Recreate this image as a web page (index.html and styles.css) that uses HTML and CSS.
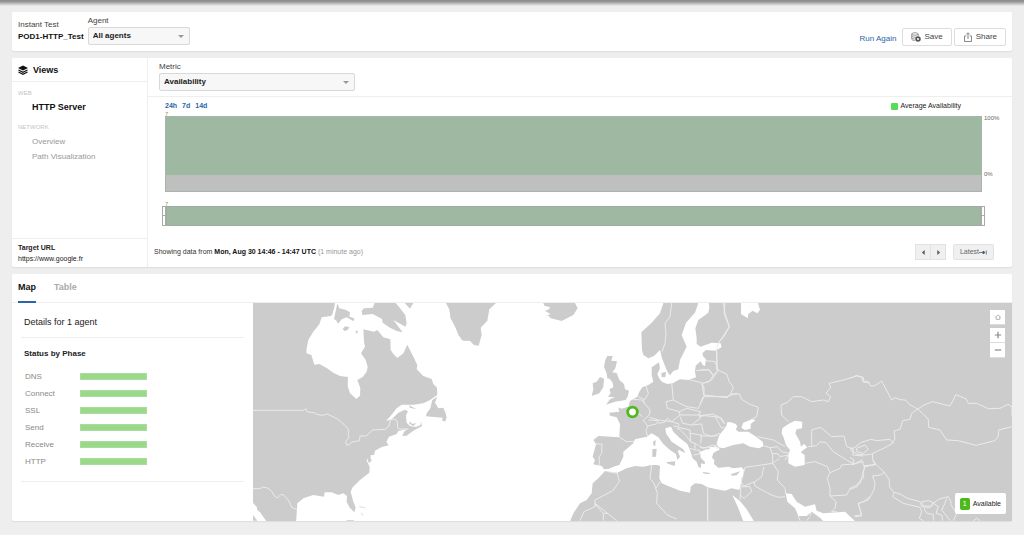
FILE: index.html
```html
<!DOCTYPE html>
<html lang="en">
<head>
<meta charset="utf-8">
<title>Instant Test</title>
<link rel="stylesheet" href="styles.css">
</head>
<body>
<div class="topshade"></div>
<div class="page">
  <header class="card header">
    <div class="test"><span class="test-label">Instant Test</span><span class="test-name">POD1-HTTP_Test</span></div>
    <div class="field agent">
      <label for="agent">Agent</label>
      <div class="pick"><select id="agent"><option>All agents</option></select></div>
    </div>
    <div class="actions">
      <a class="run" href="#">Run Again</a>
      <button class="btn" type="button"><svg class="icon" viewBox="0 0 20 20"><g fill="none" stroke="#777" stroke-width="1.5"><ellipse cx="8" cy="4" rx="6.500" ry="2.500"/><path d="M1.500 4v10c0 2 3 3 6 3M14.500 4v4M1.500 8c1 2 5 3 9 2M1.500 12c1 1 3 2 6 2"/></g><circle cx="14" cy="14" r="5.500" fill="#555"/><circle cx="14" cy="14" r="2" fill="#fff"/></svg>Save</button>
      <button class="btn" type="button"><svg class="icon" viewBox="0 0 20 20" fill="none" stroke="#666" stroke-width="1.500"><path d="M6.500 8H3v11h14V8h-3.500M10 14V2M6.500 5 10 1.500 13.500 5"/></svg>Share</button>
    </div>
  </header>

  <section class="card main">
    <aside class="side">
      <h2 class="side-title"><svg class="layers" viewBox="0 0 20 20"><path d="M10 1 20 6 10 11 0 6Z" fill="#111"/><path d="M1 10l9 4.500L19 10M1 14l9 4.500L19 14" fill="none" stroke="#111" stroke-width="2.500"/></svg>Views</h2>
      <nav class="views">
        <h3>WEB</h3>
        <a class="current" href="#">HTTP Server</a>
        <h3>NETWORK</h3>
        <a href="#">Overview</a>
        <a href="#">Path Visualization</a>
      </nav>
      <div class="target"><b>Target URL</b><span>https://www.google.fr</span></div>
    </aside>
    <div class="content">
      <div class="field metric">
        <label for="metric">Metric</label>
        <div class="pick"><select id="metric"><option>Availability</option></select></div>
      </div>
      <div class="timeline">
        <div class="range"><a href="#">24h</a><a href="#">7d</a><a href="#">14d</a><span class="legend"><i></i>Average Availability</span></div>
        <div class="tick">7</div>
        <div class="plot-row"><div class="plot"></div><div class="axis"><span>100%</span><span>0%</span></div></div>
        <div class="tick second">7</div>
        <div class="mini"><i class="handle"></i><div class="mini-fill"></div><i class="handle"></i></div>
      </div>
      <div class="footer">
        <p>Showing data from <b>Mon, Aug 30 14:46 - 14:47 UTC</b> <span>(1 minute ago)</span></p>
        <div class="pager">
          <button type="button" aria-label="Previous"><svg viewBox="0 0 6 6"><path d="M4.500 0v6L1 3Z" fill="#566"/></svg></button><button type="button" aria-label="Next"><svg viewBox="0 0 6 6"><path d="M1.500 0v6L5 3Z" fill="#566"/></svg></button>
        </div>
        <button class="latest" type="button">Latest<svg viewBox="0 0 16 10"><path d="M0 5h12M8 2l4 3-4 3ZM14.500 1v8" fill="#456" stroke="#456" stroke-width="1.500"/></svg></button>
      </div>
    </div>
  </section>

  <section class="card lower">
    <nav class="tabs"><a class="on" href="#">Map</a><a href="#">Table</a></nav>
    <div class="split">
      <div class="details">
        <h2>Details for 1 agent</h2>
        <h3>Status by Phase</h3>
        <dl class="phases">
          <dt>DNS</dt><dd></dd>
          <dt>Connect</dt><dd></dd>
          <dt>SSL</dt><dd></dd>
          <dt>Send</dt><dd></dd>
          <dt>Receive</dt><dd></dd>
          <dt>HTTP</dt><dd></dd>
        </dl>
      </div>
      <div class="map">
        <svg class="world" viewBox="253 303 759 218" preserveAspectRatio="xMidYMid slice" role="img" aria-label="World map">
          <g transform="translate(250 300) scale(.33333)">
            <path class="land" d="M0 0H256L253 22 247 43 243 48 215 52 208 73 190 95 175 120 170 145 169 160 184 165 193 194 208 192 230 204 250 218 270 228 294 231 293 258 300 280 319 297 330 287 331 265 322 240 338 231 350 215 353 200 347 180 333 160 345 140 342 125 340 88 372 95 382 90 400 112 421 118 422 150 430 162 442 174 460 160 472 134 490 170 502 195 500 208 520 228 545 237 550 252 561 263 562 285 540 300 520 310 490 314 455 314 440 325 420 350 408 363 425 358 445 338 465 329 474 334 468 346 470 368 480 378 497 381 512 375 513 364 516 378 490 392 470 407 457 408 462 395 472 387 445 393 440 402 417 410 409 425 416 436 395 441 375 452 372 465 362 465 362 478 366 480 357 490 351 475 350 482 359 500 358 518 330 540 308 562 302 575 310 605 317 622 313 637 298 622 290 605 291 588 280 580 265 585 245 577 224 577 222 590 190 585 160 595 142 610 138 670H54L30 637 22 630 20 620 0 600Z"/>
            <path class="land" d="M378 0H430L437 9 452 27 466 45 470 72 466 80 448 70 430 60 458 97 440 93 420 83 398 68 396 57 368 42 337 45 335 33 342 25 368 23ZM262 10 268 25 286 29 300 37 298 50 313 55 311 64 290 52 275 58 264 71 258 60 252 58ZM464 9H490L480 26ZM278 88 285 79 298 81 293 90 284 93ZM316 93 324 92 321 103ZM562 290 555 308 565 325 580 323 587 340 590 353 585 365 576 361 578 353 528 349 530 340 541 325 547 300ZM477 316 500 328 480 323ZM478 364 487 372 499 369 490 378 479 372ZM9 645 22 662H9ZM290 661H312V665H290ZM588 9H670V122H640L625 105 615 75 602 55 598 25Z"/>
            <path class="speck" d="M328 620l18 3M334 638l4 9"/>
            <path class="border" d="M0 331H162L167 326 172 336 192 338 200 343 217 346 232 342 262 357 282 373 295 388 295 407 298 411 287 425 290 436 300 432 306 426 328 422 330 408 348 408 368 390 405 388 417 378 422 358 437 358 442 366 443 384 448 387 475 387M0 566H30L38 561 53 564 65 574 74 589 82 594 92 584 100 584 113 598 118 606 125 622 142 629"/>
          </g>
          <g transform="translate(430 300) scale(.33333)">
            <path class="land" d="M48 9H198L178 28 172 62 152 83 155 105 146 137 132 135 118 121 95 120 80 90 62 55 58 28ZM340 9H435L443 25 430 45 395 63 360 54 357 47 348 47 362 42 345 33 357 28 360 22 343 17Z"/>
          </g>
          <g transform="translate(580 300) scale(.33333)">
            <path class="land" d="M82 168H98L94 182 111 184 106 205 97 217 110 219 118 240 132 252 135 268 147 272 143 290 137 300 105 305 78 314 90 298 105 292 84 290 92 280 88 268 100 262 98 248 90 237 82 235 80 220 72 200 76 180ZM60 231 72 236 70 262 58 280 35 288 40 268 38 250 50 245Z"/>
            <path class="land" d="M253 0H358L345 38 318 68 305 105 320 140 300 180 295 208 280 213 270 226 262 215 246 175 240 150 222 168 205 175 190 165 186 150 184 97 215 68 240 40ZM244 219 258 215 256 232 245 231ZM219 425 227 420 226 437 221 437ZM217 448 230 446 228 470 217 471ZM258 487 286 484 284 498 264 491ZM368 516 393 519 382 523 370 520Z"/>
            <path class="land" d="M1310 0H385L388 22 385 38 355 60 346 85 350 115 350 132 362 140 395 128 422 130 425 142 405 152 378 150 367 160 370 170 378 178 375 198 368 195 362 184 347 197 345 215 348 232 325 240 300 238 278 250 262 252 247 246 238 236 232 222 240 205 237 187 215 202 215 225 220 245 205 255 187 262 178 275 172 290 150 303 145 320 124 326 115 322 118 335 88 338 90 347 110 352 120 372 118 412 55 408 40 420 48 432 38 470 45 480 40 493 65 498 72 508 85 507 100 500 118 495 130 470 130 455 160 430 165 418 200 410 215 400 235 412 250 432 270 450 288 462 292 480 300 470 293 452 298 450 316 460 310 448 275 425 258 400 256 385 273 380 280 395 300 415 322 432 330 450 338 475 350 485 355 500 362 505 364 490 374 493 375 486 362 473 360 455 380 448 402 450 415 443 420 448 400 459 396 473 403 480 402 492 415 503 435 502 445 500 460 505 485 502 492 510 490 525 478 570 455 565 435 572 410 568 383 562 365 552 345 550 332 560 330 578 300 572 270 560 245 550 238 535 240 498 232 495 215 495 190 500 165 498 140 505 112 518 85 515 75 513 55 535 38 550 35 580 20 600 0 610 -20 640 -32 670H1310Z"/>
            <path class="border" d="M275 9 270 50 255 70 258 100 255 130 246 155M430 9 435 40 448 80 425 115 415 130M48 432 66 432 65 460 58 470 58 497M118 412 140 425 162 424M145 320 175 340 188 350M160 298 185 300 198 315 210 330 208 345 190 360 203 378 198 392 203 410M175 290 190 297 192 310M198 258 205 280 193 300M275 248 280 300 258 305 262 325 298 335 300 345 275 365 235 360 208 352M203 378 215 375 230 372 235 362 205 360M235 370 255 366 262 355 275 365 297 372 295 380 280 378M298 335 320 325 362 335 357 345 300 345M280 300 320 320 355 325 372 290 372 262 365 248 330 240M300 350 308 370 335 375 360 355 357 340M360 350 372 347 405 350 422 355 430 370M365 372 370 400 395 410 420 400M335 375 365 372M295 382 330 390 332 425 320 410 300 388 290 385M330 425 345 430 345 450 330 445M345 430 370 445 400 435 415 445M345 450 358 450 358 462 340 465M330 400 365 405 362 430M372 290 440 290 470 280M378 182 405 185 415 210 395 240 370 250M348 212 385 208 398 225M410 152 410 210M85 515 112 520 118 545 98 572 45 600 45 620 12 635 0 662M45 612 70 640V662M45 610 110 662M70 640H85M215 495 210 535 222 550 232 580 230 610 262 645 290 657M240 545 228 565M383 562V662"/>
          </g>
          <g transform="translate(700 300) scale(.33333)">
            <path class="border" d="M75 9 72 40 88 80 72 110 55 128 50 150 52 210 80 222 88 245 100 262 92 282 118 282 125 298 150 313 175 322 170 350 155 358M0 210 28 210 40 225 55 212M40 225 28 245 5 250 12 285 82 293 92 282M10 290 0 312M0 347 40 342 58 372 65 385 75 380M45 345 65 355 75 372M0 408 52 408M0 443 38 443 52 433M190 437 210 443 218 465 218 490 170 497 135 502 132 515M172 410 220 420 255 440M210 443 232 440 245 455 268 460M218 460 235 462 240 470 265 465 255 480M218 490 238 475M218 490 235 515 232 540 255 565 257 582M192 500 185 530 165 545 132 558 122 545M162 545 165 558 190 572 215 585 235 592 255 590M125 560 150 560 155 575 132 595 120 585M125 530 120 600M265 365 245 345 243 315 262 307 280 290 305 290 335 305 370 300 385 305 392 290 378 280 392 262 387 250 430 240 470 228 490 232 492 245 510 250M335 440 335 390 362 382 395 410 432 408 440 440 460 447 458 465 490 468M325 440 350 437 360 425 378 428 400 455 440 480 460 490M314 490 345 485 382 500 390 518 420 505 425 495 460 492 490 485M390 518 382 535 390 565 390 588 440 585 450 565 480 550 495 500 510 497M390 588 408 605 405 625 395 635H410M510 590 490 605 475 610 485 648 465 650M23 565V662M295 648 300 662M330 650 320 662M340 615 330 648"/>
            <path class="sea" d="M78 380 82 367 90 366 108 372 112 380 107 388 115 395 145 395 165 408 188 425 190 438 178 445 150 440 130 430 100 435 70 445 55 442 50 430 58 405ZM125 380 130 368 155 358 167 360 152 372 152 386 135 390 125 384ZM247 385 265 372 285 362 307 365 306 385 290 388 286 400 300 425 303 440 312 432 322 442 310 450 302 457 314 465 314 495 285 500 265 490 265 465 270 450 258 435 250 410 245 400ZM123 9H174L180 30 172 40 158 32 145 42 143 55 123 42ZM97 585 122 605 140 628 162 664H130L115 625ZM257 580 275 582 290 605 315 620 345 613 350 632 370 640 435 635 465 664H370L362 655 335 635 320 648 295 648 285 625 262 605ZM30 441 55 442 42 452 28 450Z"/>
            <path class="land" d="M92 523 120 514 110 526 97 527Z"/>
          </g>
          <g transform="translate(850 300) scale(.33333)">
            <path class="border" d="M0 235 20 226 36 232 39 246 55 245 62 258 75 257 95 243 125 300 135 293 150 299 165 300 180 314 203 327 185 340 180 358 158 362 150 388 132 393 135 415 127 430 105 443 68 460 68 478 77 492 85 500 103 517 118 540 118 560 132 577 150 582 172 595 210 605 215 620 240 623 250 610 265 598 295 590 305 610M203 327 222 315 248 305 300 318 310 300 317 284 348 296 355 310 380 310 415 326 450 325 474 313 486 320V350M203 327 218 340 235 358 236 382 270 390 290 420 325 422 378 436 435 422 445 408 446 390 486 380M0 448 18 440 32 428 62 418 80 422 120 418 130 430M0 448 20 462 45 465 68 462M20 445 45 435 55 448 40 460 20 455ZM0 472 12 480 8 495 35 480 42 497 75 495 68 480M40 500 78 492M45 498 38 520 42 532 25 548 22 560 0 568M103 517 92 525 68 528 75 550 72 570 55 600 25 610 35 645 12 648M132 577 128 590 160 610 210 622M215 605 235 602 250 608 245 618 220 618ZM210 622 215 635 208 655 220 662M222 625 230 640 250 643 250 662M250 610 265 620 258 640 275 645 278 662M290 595 285 610 275 630 290 648 300 662M300 610 320 640 310 662M370 662 380 655 390 662"/>
            <path class="sea" d="M0 650 16 664H0Z"/>
          </g>
          <circle cx="632.500" cy="412" r="4.800" fill="#fff" stroke="#4fb81c" stroke-width="2.800"/>
        </svg>
        <div class="zoomer">
          <button class="home" type="button" aria-label="Reset view"><svg viewBox="0 0 10 10" fill="none" stroke="#888"><path d="M2 4.500V9h6V4.500M.5 5.500 5 1.500l4.500 4"/></svg></button>
          <button type="button" aria-label="Zoom in"><svg viewBox="0 0 10 10" stroke="#888" stroke-width="1.500"><path d="M1 5h8M5 1v8"/></svg></button>
          <button type="button" aria-label="Zoom out"><svg viewBox="0 0 10 10" stroke="#888" stroke-width="1.500"><path d="M1 5h8"/></svg></button>
        </div>
        <div class="key"><b>1</b>Available</div>
      </div>
    </div>
  </section>
</div>
</body>
</html>
```
FILE: styles.css
```css
* { box-sizing: border-box; }
body { margin: 0; background: #eee; color: #222; font: 8px/12px "Liberation Sans", Arial, sans-serif; }
h2, h3, p, dl, dd { margin: 0; font: inherit; }
a { color: inherit; text-decoration: none; }
button, select { font: inherit; color: inherit; cursor: pointer; }
svg { display: block; flex: none; }

.topshade { height: 6px; background: linear-gradient(#8a8a8a, #999 30%, #eee); }
.page { display: flex; flex-direction: column; gap: 7px; padding: 6px 12px 14px; }
.card { background: #fff; border-radius: 2px; box-shadow: 0 1px 1px #ddd; }

.header { display: flex; align-items: flex-start; gap: 4px; min-height: 39px; padding: 3px 6px 0; }
.test { display: flex; flex-direction: column; padding-top: 4px; color: #444; }
.test-name { color: #111; font-weight: bold; }
.field label { display: block; color: #444; }
.pick { position: relative; }
.pick::after { content: ""; position: absolute; right: 6px; top: 8px; border: 3px solid transparent; border-top-color: #999; border-bottom: 0; pointer-events: none; }
.pick select { display: block; appearance: none; width: 100%; height: 18px; padding: 0 4px; border: 1px solid #d8d8d8; border-radius: 2px; background: #f7f7f7; font-weight: bold; }
.agent { width: 102px; }
.actions { display: flex; align-items: center; gap: 2px; margin-left: auto; padding-top: 13px; }
.run { margin-right: 4px; padding-top: 4px; color: #2a65a8; }
.btn { display: flex; align-items: center; justify-content: center; gap: 3px; height: 18px; padding: 0 8px; border: 1px solid #ddd; border-radius: 2px; background: #fff; color: #444; }
.icon { width: 10px; height: 10px; }

.main { display: flex; min-height: 209px; }
.side { display: flex; flex-direction: column; width: 136px; border-right: 1px solid #eee; }
.side-title { display: flex; align-items: center; gap: 5px; height: 24px; padding: 0 6px; border-bottom: 1px solid #eee; font-size: 9px; font-weight: bold; color: #111; }
.layers { width: 10px; height: 10px; }
.views { display: flex; flex-direction: column; flex: 1; padding: 4px 6px; }
.views h3 { color: #c4c4c4; font-size: 6px; line-height: 14px; }
.views a { padding-left: 14px; color: #999; line-height: 15px; }
.views .current { margin-bottom: 5px; color: #111; font-size: 9px; font-weight: bold; }
.target { display: flex; flex-direction: column; padding: 3px 6px; border-top: 1px solid #eee; font-size: 7px; line-height: 11px; }

.content { display: flex; flex-direction: column; flex: 1; min-width: 0; }
.metric { height: 39px; padding: 3px 12px 0 11px; border-bottom: 1px solid #eee; }
.metric .pick { max-width: 196px; }
.timeline { padding: 3px 9px 0 14px; }
.range { display: flex; gap: 5px; padding-left: 3px; color: #2a65a8; font-size: 7px; font-weight: bold; }
.legend { display: flex; align-items: center; gap: 3px; margin: 0 42px 0 auto; color: #222; font-weight: normal; }
.legend i { width: 7px; height: 7px; border-radius: 1px; background: #5d5; }
.tick { height: 4px; padding-left: 3px; color: #a94; font-size: 6px; line-height: 4px; }
.plot-row { display: flex; gap: 2px; padding-left: 3px; }
.plot { flex: 1; height: 76px; border: 1px solid #a8b5a9; background: linear-gradient(#9eb8a1 58px, #bfbfbf 0); }
.axis { display: flex; flex-direction: column; justify-content: space-between; width: 19px; height: 60px; color: #666; font-size: 6px; line-height: 4px; }
.second { margin-top: 10px; }
.mini { display: flex; margin-right: 18px; height: 20px; }
.mini-fill { flex: 1; border: 1px solid #a0aca1; background: #9eb8a1; }
.handle { width: 4px; border: 1px solid #aaa; background: linear-gradient(#fff 8px, #aaa 8px 9px, #fff 9px); }
.footer { display: flex; align-items: center; gap: 7px; margin-top: auto; padding: 0 18px 7px 6px; color: #333; font-size: 7px; }
.footer p { flex: 1; }
.footer p b { color: #111; }
.footer p span { color: #999; }
.pager { display: flex; }
.pager button, .latest { display: flex; align-items: center; justify-content: center; height: 16px; padding: 0; border: 1px solid #e2e2e2; background: #f0f0f0; color: #666; }
.pager button { width: 16px; }
.pager button + button { margin-left: -1px; }
.pager svg { width: 5px; height: 5px; }
.latest { width: 41px; border-radius: 2px; }
.latest svg { width: 8px; height: 5px; }

.tabs { display: flex; gap: 18px; height: 29px; padding: 0 6px; border-bottom: 1px solid #eee; color: #aaa; font-size: 9px; font-weight: bold; line-height: 27px; }
.tabs .on { height: 29px; border-bottom: 2px solid #2a65a8; color: #111; }
.split { display: flex; min-height: 218px; }
.details { width: 241px; padding: 0 9px; }
.details h2 { height: 35px; padding-left: 3px; border-bottom: 1px solid #eee; font-size: 9px; line-height: 38px; }
.details h3 { padding: 10px 3px 8px; font-weight: bold; }
.phases { display: grid; grid-template-columns: 55px 67px; align-items: center; grid-auto-rows: 17px; padding: 0 4px 11px; border-bottom: 1px solid #eee; color: #888; }
.phases dt { font-size: 8px; }
.phases dd { height: 7px; border: 1px solid #a9dd9b; background: #9bd88a; }
.map { position: relative; flex: 1; min-width: 0; background: #fff; }
.world { position: absolute; width: 100%; height: 100%; }
.land { fill: #ccc; }
.sea { fill: #fff; }
.border, .speck { fill: none; stroke: #ebebeb; stroke-width: 3; stroke-linejoin: round; }
.speck { stroke: #ddd; }
.zoomer { position: absolute; top: 7px; right: 7px; display: flex; flex-direction: column; }
.zoomer button { display: flex; align-items: center; justify-content: center; width: 15px; height: 15px; padding: 0; border: 0; border-bottom: 1px solid #ddd; background: #fff; }
.zoomer .home { margin-bottom: 3px; }
.zoomer svg { width: 8px; height: 8px; }
.zoomer .home svg { width: 6px; height: 6px; }
.key { position: absolute; right: 6px; bottom: 7px; display: flex; align-items: center; gap: 3px; height: 21px; padding: 0 5px; border-radius: 2px; background: #fff; font-size: 7px; }
.key b { width: 10px; border-radius: 2px; background: #4fb81c; color: #fff; font-weight: normal; text-align: center; }
```
